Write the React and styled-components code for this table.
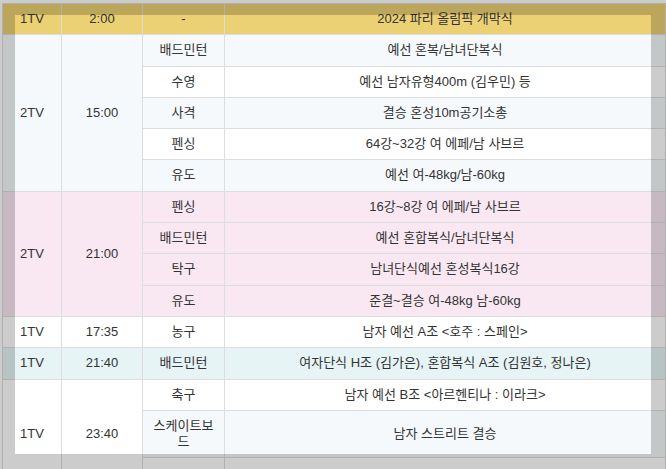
import React from "react";
import styled, { createGlobalStyle } from "styled-components";

const GlobalStyle = createGlobalStyle`
  html, body {
    margin: 0;
    padding: 0;
    background: #ffffff;
    overflow: hidden;
  }
  body {
    font-family: "Liberation Sans", "Noto Sans CJK KR", sans-serif;
  }
`;

const tones = {
  gold: "#ebd074",
  pink: "#f9e8f2",
  cyan: "#e6f4f6",
};

const Page = styled.div`
  position: relative;
  width: 666px;
  height: 469px;
  overflow: hidden;
  padding: 3px 0 0 2px;
  box-sizing: border-box;
`;

const Table = styled.table`
  width: 664px;
  border-collapse: collapse;
  table-layout: fixed;
  font-size: 13px;
  line-height: 16.3px;
  color: #333333;
`;

const Row = styled.tr`
  background: ${(p) => (p.$tone ? tones[p.$tone] : "#ffffff")};

  &:nth-child(even) {
    background: ${(p) => (p.$tone ? tones[p.$tone] : "#f6f9fb")};
  }
`;

const Cell = styled.td`
  border: 1px solid #dddddd;
  padding: 7px 6px;
  text-align: center;
  vertical-align: middle;
  overflow-wrap: anywhere;
`;

// dimmed surroundings, spotlight over the table
const Spotlight = styled.div`
  position: absolute;
  left: 15px;
  top: 15px;
  width: 636px;
  height: 439px;
  box-shadow: 0 0 0 2000px rgba(0, 0, 0, 0.2);
  pointer-events: none;
`;

const schedule = [
  {
    ch: "1TV",
    time: "2:00",
    tone: "gold",
    items: [{ sport: "-", desc: "2024 파리 올림픽 개막식" }],
  },
  {
    ch: "2TV",
    time: "15:00",
    items: [
      { sport: "배드민턴", desc: "예선 혼복/남녀단복식" },
      { sport: "수영", desc: "예선 남자유형400m (김우민) 등" },
      { sport: "사격", desc: "결승 혼성10m공기소총" },
      { sport: "펜싱", desc: "64강~32강 여 에페/남 사브르" },
      { sport: "유도", desc: "예선 여-48kg/남-60kg" },
    ],
  },
  {
    ch: "2TV",
    time: "21:00",
    tone: "pink",
    items: [
      { sport: "펜싱", desc: "16강~8강 여 에페/남 사브르" },
      { sport: "배드민턴", desc: "예선 혼합복식/남녀단복식" },
      { sport: "탁구", desc: "남녀단식예선 혼성복식16강" },
      { sport: "유도", desc: "준결~결승 여-48kg 남-60kg" },
    ],
  },
  {
    ch: "1TV",
    time: "17:35",
    items: [{ sport: "농구", desc: "남자 예선 A조 <호주 : 스페인>" }],
  },
  {
    ch: "1TV",
    time: "21:40",
    tone: "cyan",
    items: [
      { sport: "배드민턴", desc: "여자단식 H조 (김가은), 혼합복식 A조 (김원호, 정나은)" },
    ],
  },
  {
    ch: "1TV",
    time: "23:40",
    items: [
      { sport: "축구", desc: "남자 예선 B조 <아르헨티나 : 이라크>" },
      { sport: "스케이트보드", desc: "남자 스트리트 결승" },
      { sport: "\u00a0", desc: "\u00a0" },
    ],
  },
];

export default function App() {
  return (
    <>
      <GlobalStyle />
      <Page>
        <Table>
          <colgroup>
            <col style={{ width: 59 }} />
            <col style={{ width: 81 }} />
            <col style={{ width: 82 }} />
            <col />
          </colgroup>
          <tbody>
            {schedule.flatMap((group, gi) =>
              group.items.map((item, ii) => (
                <Row key={`${gi}-${ii}`} $tone={group.tone}>
                  {ii === 0 && (
                    <>
                      <Cell rowSpan={group.items.length}>{group.ch}</Cell>
                      <Cell rowSpan={group.items.length}>{group.time}</Cell>
                    </>
                  )}
                  <Cell>{item.sport}</Cell>
                  <Cell>{item.desc}</Cell>
                </Row>
              ))
            )}
          </tbody>
        </Table>
        <Spotlight />
      </Page>
    </>
  );
}
